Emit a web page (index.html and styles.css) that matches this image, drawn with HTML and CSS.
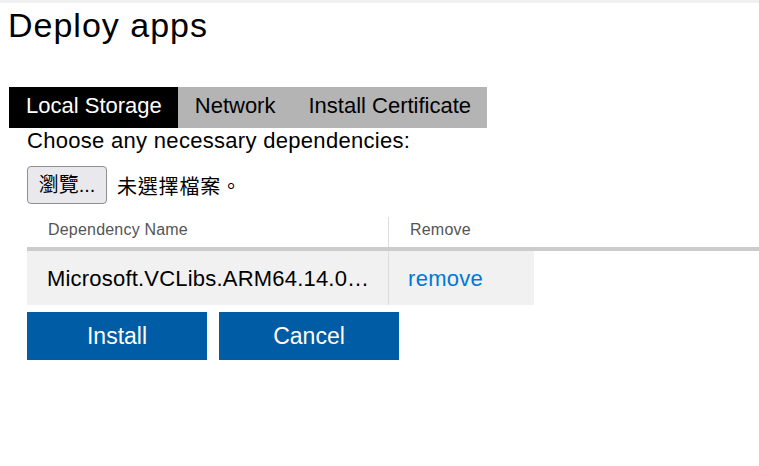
FILE: index.html
```html
<!DOCTYPE html>
<html lang="zh-Hant">
<head>
<meta charset="utf-8">
<title>Deploy apps</title>
<link rel="stylesheet" href="styles.css">
</head>
<body>
<div class="topbar"></div>
<div class="page">
  <h1 class="title">Deploy apps</h1>
  <div class="tabs">
    <div class="tab tab-active">Local Storage</div>
    <div class="tab">Network</div>
    <div class="tab">Install Certificate</div>
  </div>
  <div class="panel">
    <div class="prompt">Choose any necessary dependencies:</div>
    <div class="file-row">
      <span class="file-btn">瀏覽...</span>
      <span class="file-status">未選擇檔案。</span>
    </div>
    <div class="table">
      <div class="thead">
        <div class="th th-name">Dependency Name</div>
        <div class="th th-remove">Remove</div>
      </div>
      <div class="trow">
        <div class="td td-name">Microsoft.VCLibs.ARM64.14.00.appx</div>
        <div class="td td-remove"><a class="link" href="#">remove</a></div>
      </div>
    </div>
    <div class="actions">
      <button class="btn">Install</button>
      <button class="btn">Cancel</button>
    </div>
  </div>
</div>
</body>
</html>
```

FILE: styles.css
```css
html, body {
  margin: 0;
  padding: 0;
  background: #ffffff;
  overflow: hidden;
}
body {
  font-family: "Liberation Sans", Arial, "Noto Sans CJK TC", sans-serif;
  color: #000;
}
.topbar {
  height: 3px;
  background: #f0f0f0;
}
.page {
  padding: 0 0 0 8px;
}
.title {
  margin: 3px 0 0 0;
  font-size: 34px;
  letter-spacing: 1px;
  font-weight: normal;
  line-height: 38px;
}
.tabs {
  display: inline-flex;
  margin: 43px 0 0 1px;
  background: #b4b4b4;
  height: 41px;
}
.tab {
  flex-shrink: 0;
  white-space: nowrap;
  font-size: 22px;
  padding: 0 16px 4px 17px;
  line-height: 37px;
  color: #000;
}
.tab-active {
  background: #000;
  color: #fff;
}
.panel {
  padding-left: 19px;
}
.prompt {
  font-size: 22px;
  letter-spacing: 0.3px;
  line-height: 25px;
}
.file-row {
  display: flex;
  align-items: center;
  margin-top: 13px;
  height: 38px;
}
.file-btn {
  box-sizing: border-box;
  height: 38px;
  width: 80px;
  border: 1px solid #8f8f8f;
  border-radius: 4px;
  background: #e9e9ed;
  font-family: "Liberation Sans", "Noto Sans CJK TC", sans-serif;
  font-size: 20px;
  line-height: 36px;
  text-align: center;
}
.file-status {
  margin-left: 10px;
  font-family: "Noto Sans CJK TC", sans-serif;
  font-size: 20px;
  letter-spacing: 0.8px;
}
.table {
  margin-top: 13px;
  margin-right: -20px;
}
.thead {
  display: flex;
  height: 30px;
  border-bottom: 4px solid #cccccc;
}
.th {
  box-sizing: border-box;
  font-size: 16px;
  letter-spacing: 0.2px;
  line-height: 26px;
  padding: 0 0 4px 21px;
  color: #555;
}
.th-name {
  width: 362px;
  border-right: 1px solid #dddddd;
}
.trow {
  display: flex;
}
.td {
  box-sizing: border-box;
  background: #f1f1f1;
  font-size: 22px;
  line-height: 56px;
  height: 54px;
}
.td-name {
  width: 362px;
  padding: 0 16px 0 20px;
  letter-spacing: 0.2px;
  border-right: 1px solid #dddddd;
  white-space: nowrap;
  overflow: hidden;
  text-overflow: ellipsis;
}
.td-remove {
  width: 145px;
  padding-left: 19px;
  letter-spacing: 0.3px;
}
.link {
  color: #0078d7;
  text-decoration: none;
}
.actions {
  display: flex;
  gap: 12px;
  margin-top: 7px;
}
.btn {
  width: 180px;
  height: 48px;
  border: none;
  background: #005ca4;
  color: #fff;
  font-family: "Liberation Sans", Arial, sans-serif;
  font-size: 23px;
  padding: 0;
}
```
